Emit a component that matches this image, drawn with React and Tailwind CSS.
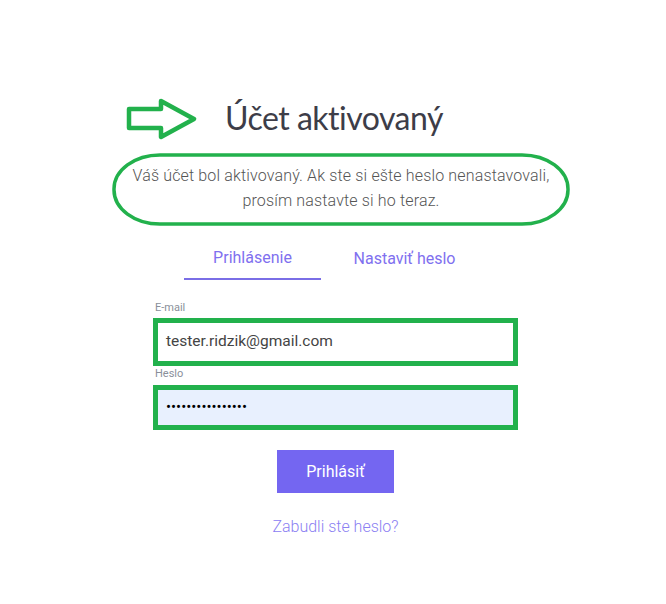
// App.jsx
const green = '#22b14c'

const Arrow = () => (
  <svg
    className="absolute left-[124px] top-0"
    width="76"
    height="42"
    viewBox="0 0 76 42"
    fill="none"
  >
    <path
      d="M5 11 H37 V3 L70 21 L37 39 V30 H5 Z"
      stroke={green}
      strokeWidth="4.5"
      strokeLinejoin="round"
    />
  </svg>
)

const Ellipse = () => (
  <svg
    className="absolute inset-0"
    width="458"
    height="73"
    viewBox="0 0 458 73"
    fill="none"
  >
    <rect
      x="2"
      y="2"
      width="454"
      height="69"
      rx="46"
      ry="34"
      stroke={green}
      strokeWidth="3.5"
    />
  </svg>
)

const App = () => {
  return (
    <div className="min-h-screen bg-white font-['Roboto',sans-serif]">
      <div className="relative mx-auto flex w-[666px] flex-col items-center pt-[98px]">
        {/* Title with the green arrow drawn beside it */}
        <div className="relative flex w-full justify-center">
          <Arrow />
          <h1 className="ml-[2px] font-['Lato',sans-serif] text-[32px] leading-[40px] tracking-[-0.5px] text-[#3d3d48]">
            Účet aktivovaný
          </h1>
        </div>

        {/* Message, circled */}
        <div className="relative ml-[16px] mt-[15px] h-[73px] w-[458px]">
          <Ellipse />
          <p className="relative pt-[10px] text-center text-[16px] font-light leading-[25px] tracking-[0.15px] text-[#555]">
            Váš účet bol aktivovaný. Ak ste si ešte heslo nenastavovali,
            <br />
            prosím nastavte si ho teraz.
          </p>
        </div>

        <div className="ml-[5px] w-[365px]">
          {/* Tabs */}
          <div className="mt-[22px] flex gap-[15px] pl-[31px]">
            <button className="w-[137px] border-b-2 border-[#7a6ee6] pb-[10px] text-[16px] leading-[20px] text-[#7f70ef]">
              Prihlásenie
            </button>
            <button className="w-[137px] pb-[10px] text-[16px] leading-[20px] text-[#7f70ef]">
              Nastaviť heslo
            </button>
          </div>

          {/* Form */}
          <label className="mt-[21px] mb-[3px] block pl-[2px] text-[11px] leading-[14px] text-[#8a8f9a]">
            E-mail
          </label>
          <div
            className="flex h-[48px] items-center border-[5px] bg-white px-[8px]"
            style={{ borderColor: green }}
          >
            <span className="text-[15.5px] text-[#444]">
              tester.ridzik@gmail.com
            </span>
          </div>
          <label className="mt-[1px] mb-[4px] block pl-[2px] text-[11px] leading-[14px] text-[#8a8f9a]">
            Heslo
          </label>
          <div
            className="flex h-[45px] items-center border-[5px] bg-[#e8f0fe] px-[8px]"
            style={{ borderColor: green }}
          >
            <input
              type="password"
              readOnly
              value="tester.ridzik123"
              className="w-full bg-transparent text-[15px] text-black outline-none"
            />
          </div>

          <div className="flex flex-col items-center">
            <button className="mt-[20px] h-[43px] w-[117px] bg-[#7466f1] text-[16px] text-white">
              Prihlásiť
            </button>
            <a className="mt-[24px] text-[16px] font-light leading-[20px] text-[#8b80f2]">
              Zabudli ste heslo?
            </a>
          </div>
        </div>
      </div>
    </div>
  )
}

export default App
